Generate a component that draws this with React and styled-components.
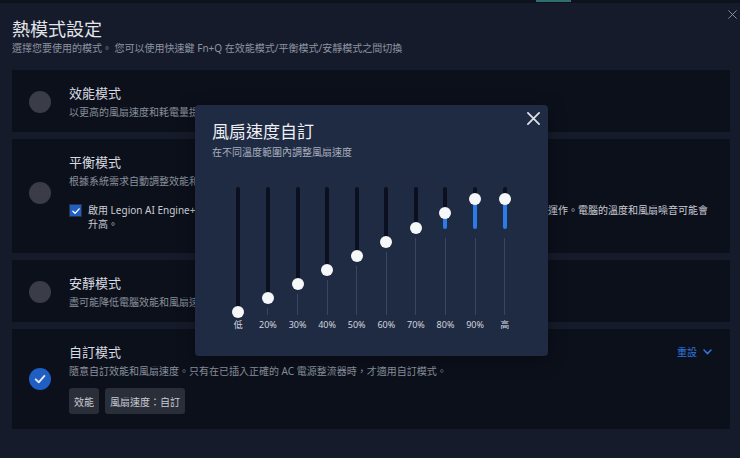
import React from "react";
import styled, { createGlobalStyle } from "styled-components";

const GlobalStyle = createGlobalStyle`
  html, body {
    margin: 0;
    padding: 0;
    background: #161b2b;
  }
  body {
    font-family: "Noto Sans", "Noto Sans CJK TC", sans-serif;
    color: #d6d9df;
  }
  * { box-sizing: border-box; }
`;

const fanLevels = [
  { label: "低", pos: 125 },
  { label: "20%", pos: 111 },
  { label: "30%", pos: 97 },
  { label: "40%", pos: 83 },
  { label: "50%", pos: 69 },
  { label: "60%", pos: 55 },
  { label: "70%", pos: 41 },
  { label: "80%", pos: 26 },
  { label: "90%", pos: 12 },
  { label: "高", pos: 12 },
];

const BLUE_END = 42;
const TRACK_H = 128;

const CloseIcon = ({ size, stroke, color }) => (
  <svg width={size} height={size} viewBox="0 0 14 14">
    <path d="M1 1 L13 13 M13 1 L1 13" stroke={color} strokeWidth={stroke} strokeLinecap="round" />
  </svg>
);

const CheckIcon = ({ size, color, stroke }) => (
  <svg width={size} height={size} viewBox="0 0 12 12">
    <path d="M2.3 6.3 L4.9 8.8 L9.8 3.4" fill="none" stroke={color} strokeWidth={stroke} strokeLinecap="round" strokeLinejoin="round" />
  </svg>
);

const App = () => {
  return (
    <Screen>
      <GlobalStyle />
      <TopStrip>
        <TabMark />
      </TopStrip>
      <PageClose>
        <CloseIcon size={9} stroke={1.3} color="#9aa0ac" />
      </PageClose>
      <Page>
        <Title>熱模式設定</Title>
        <Subtitle>
          選擇您要使用的模式。 您可以使用快速鍵 Fn+Q 在效能模式/平衡模式/安靜模式之間切換
        </Subtitle>
        <Cards>
          <Card>
            <Radio />
            <CardBody>
              <CardTitle>效能模式</CardTitle>
              <CardDesc>以更高的風扇速度和耗電量提升電腦效能</CardDesc>
            </CardBody>
          </Card>
          <Card $bottom={22}>
            <Radio />
            <CardBody>
              <CardTitle>平衡模式</CardTitle>
              <CardDesc>根據系統需求自動調整效能和風扇速度</CardDesc>
              <CheckRow>
                <CheckBox>
                  <CheckIcon size={10} color="#ffffff" stroke={1.6} />
                </CheckBox>
                <CheckText>
                  <Line>
                    啟用 Legion AI Engine+ 可根據您正在使用的應用程式自動調整系統效能與散熱，讓電腦隨時以最佳狀態運作。電腦的溫度和風扇噪音可能會
                  </Line>
                  升高。
                </CheckText>
              </CheckRow>
            </CardBody>
          </Card>
          <Card>
            <Radio />
            <CardBody>
              <CardTitle>安靜模式</CardTitle>
              <CardDesc>盡可能降低電腦效能和風扇速度以保持安靜</CardDesc>
            </CardBody>
          </Card>
          <Card $bottom={15}>
            <Radio $checked>
              <CheckIcon size={14} color="#e8ebf0" stroke={1.6} />
            </Radio>
            <CardBody>
              <CardHead>
                <CardTitle>自訂模式</CardTitle>
                <ResetLink>
                  重設
                  <svg width="9" height="6" viewBox="0 0 9 6">
                    <path d="M1 1 L4.5 4.6 L8 1" fill="none" stroke="#2d74dc" strokeWidth="1.5" strokeLinecap="round" />
                  </svg>
                </ResetLink>
              </CardHead>
              <CardDesc>
                隨意自訂效能和風扇速度。只有在已插入正確的 AC 電源整流器時，才適用自訂模式。
              </CardDesc>
              <Chips>
                <Chip>效能</Chip>
                <Chip>風扇速度：自訂</Chip>
              </Chips>
            </CardBody>
          </Card>
        </Cards>
      </Page>

      <Modal>
        <ModalClose>
          <CloseIcon size={13} stroke={1.9} color="#dde1e8" />
        </ModalClose>
        <ModalTitle>風扇速度自訂</ModalTitle>
        <ModalSub>在不同溫度範圍內調整風扇速度</ModalSub>
        <Sliders>
          {fanLevels.map((lv) => {
            const thinStart = Math.max(lv.pos, BLUE_END - 1) + 10;
            return (
              <SliderCol key={lv.label}>
                <Track>
                  <DarkPart style={{ height: lv.pos }} />
                  {lv.pos < BLUE_END - 1 && (
                    <BluePart style={{ top: lv.pos, height: BLUE_END - lv.pos }} />
                  )}
                  {thinStart < TRACK_H && (
                    <ThinPart style={{ top: thinStart, height: TRACK_H - thinStart }} />
                  )}
                  <Thumb style={{ top: lv.pos - 6 }} />
                </Track>
                <SliderLabel>{lv.label}</SliderLabel>
              </SliderCol>
            );
          })}
        </Sliders>
      </Modal>
    </Screen>
  );
};

export default App;

const Screen = styled.div`
  position: relative;
  width: 740px;
  height: 458px;
  overflow: hidden;
  background: #161b2b;
`;

const TopStrip = styled.div`
  height: 3px;
  background: #0e121d;
  position: relative;
`;

const TabMark = styled.div`
  position: absolute;
  left: 536px;
  top: 0;
  width: 35px;
  height: 2px;
  background: #2e6e70;
`;

const PageClose = styled.div`
  position: absolute;
  right: 3px;
  top: 10px;
  display: flex;
`;

const Page = styled.div`
  padding: 15px 10px 0 12px;
`;

const Title = styled.h1`
  margin: 0;
  font-size: 18px;
  line-height: 22px;
  font-weight: 400;
  color: #e2e5ea;
`;

const Subtitle = styled.div`
  margin-top: 1px;
  font-size: 10px;
  line-height: 14px;
  color: #8d94a1;
`;

const Cards = styled.div`
  display: flex;
  flex-direction: column;
  gap: 7px;
  margin-top: 15px;
`;

const Card = styled.div`
  display: flex;
  align-items: center;
  gap: 18px;
  background: #0c101b;
  padding: 15px 17px ${(p) => p.$bottom || 13}px;
`;

const Radio = styled.div`
  flex: none;
  width: 22px;
  height: 22px;
  border-radius: 50%;
  background: ${(p) => (p.$checked ? "#1f5ec3" : "#3a3d47")};
  display: flex;
  align-items: center;
  justify-content: center;
`;

const CardBody = styled.div`
  flex: 1;
  min-width: 0;
`;

const CardHead = styled.div`
  display: flex;
  align-items: center;
  justify-content: space-between;
`;

const CardTitle = styled.div`
  font-size: 13px;
  line-height: 16px;
  color: #d8dbe1;
`;

const CardDesc = styled.div`
  margin-top: 4px;
  font-size: 10px;
  line-height: 14px;
  color: #8a909c;
  white-space: nowrap;
`;

const ResetLink = styled.div`
  display: flex;
  align-items: center;
  gap: 6px;
  margin-right: 1px;
  font-size: 10px;
  line-height: 14px;
  color: #2d74dc;
`;

const CheckRow = styled.div`
  display: flex;
  align-items: flex-start;
  gap: 6px;
  margin-top: 15px;
`;

const CheckBox = styled.div`
  flex: none;
  width: 13px;
  height: 13px;
  margin-top: 1px;
  border: 1px solid #2a3040;
  background: #1f5ec3;
  display: flex;
  align-items: center;
  justify-content: center;
`;

const CheckText = styled.div`
  font-size: 10px;
  line-height: 14px;
  color: #c9ccd3;
`;

const Line = styled.div`
  white-space: nowrap;
`;

const Chips = styled.div`
  display: flex;
  gap: 6px;
  margin-top: 10px;
`;

const Chip = styled.div`
  height: 26px;
  padding: 0 5px;
  display: flex;
  align-items: center;
  border-radius: 3px;
  background: #2a2e39;
  font-size: 10px;
  color: #c9ccd3;
`;

const Modal = styled.div`
  position: absolute;
  left: 195px;
  top: 105px;
  width: 353px;
  height: 251px;
  border-radius: 4px;
  background: #1f2a43;
  padding: 16px 17px 0;
  box-shadow: 0 4px 18px rgba(0, 0, 0, 0.35);
`;

const ModalClose = styled.div`
  position: absolute;
  right: 8px;
  top: 7px;
  display: flex;
`;

const ModalTitle = styled.div`
  font-size: 17px;
  line-height: 22px;
  color: #eef0f4;
`;

const ModalSub = styled.div`
  margin-top: 2px;
  font-size: 10px;
  line-height: 14px;
  color: #a9b0be;
`;

const Sliders = styled.div`
  display: grid;
  grid-template-columns: repeat(10, 29.6px);
  justify-content: center;
  margin-top: 28px;
`;

const SliderCol = styled.div`
  display: flex;
  flex-direction: column;
  align-items: center;
`;

const Track = styled.div`
  position: relative;
  width: 12px;
  height: ${TRACK_H}px;
`;

const DarkPart = styled.div`
  position: absolute;
  left: 4px;
  top: 0;
  width: 4px;
  border-radius: 2px;
  background: #0b1020;
`;

const BluePart = styled.div`
  position: absolute;
  left: 4px;
  width: 4px;
  border-radius: 0 0 2px 2px;
  background: #2b7ce8;
`;

const ThinPart = styled.div`
  position: absolute;
  left: 5.5px;
  width: 1px;
  background: #3a4562;
`;

const Thumb = styled.div`
  position: absolute;
  left: 0;
  width: 12px;
  height: 12px;
  border-radius: 50%;
  background: #f6f7f9;
`;

const SliderLabel = styled.div`
  margin-top: 4px;
  font-size: 9px;
  line-height: 12px;
  color: #d2d6de;
`;
